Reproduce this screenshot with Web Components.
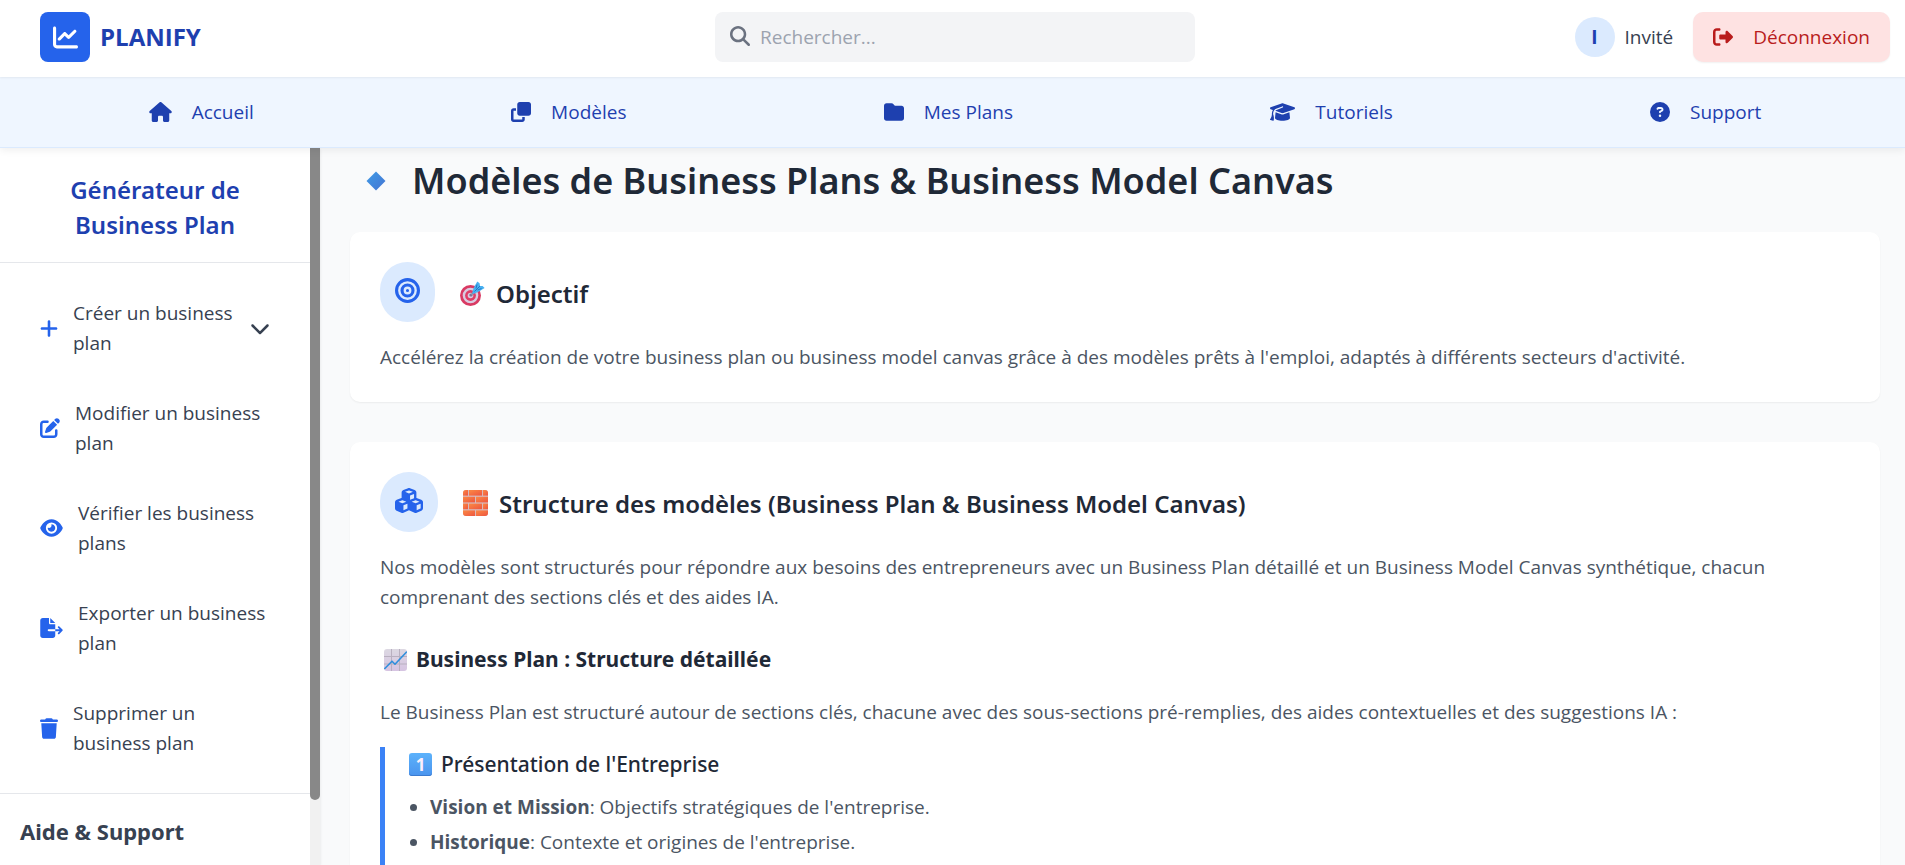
<!DOCTYPE html>
<html lang="fr">
<head>
<meta charset="utf-8">
<meta name="viewport" content="width=device-width, initial-scale=1">
<title>Planify – Modèles</title>
<style>
  :root {
    --blue-50: #eff6ff; --blue-100: #dbeafe; --blue-500: #3b82f6; --blue-600: #2563eb; --blue-800: #1e40af;
    --gray-50: #f9fafb; --gray-100: #f3f4f6; --gray-200: #e5e7eb; --gray-400: #9ca3af; --gray-500: #6b7280;
    --gray-600: #4b5563; --gray-700: #374151; --gray-800: #1f2937;
    --text: 19px; --heading: 24px; --subheading: 21px;
    --heading-font: "Noto Sans", "Open Sans", sans-serif;
  }
  body {
    margin: 0;
    font: 400 var(--text)/30px "Open Sans", "Noto Sans", sans-serif;
    color: var(--gray-700);
    background: var(--gray-50);
  }
</style>
</head>
<body>
<planify-app>
  <planify-header slot="header" user="Invité"></planify-header>
  <planify-nav slot="nav">
    <nav-link icon="home" size="23" href="#accueil">Accueil</nav-link>
    <nav-link icon="clone" size="20" href="#modeles">Modèles</nav-link>
    <nav-link icon="folder" size="20" href="#plans">Mes Plans</nav-link>
    <nav-link icon="graduation" size="25" href="#tutoriels">Tutoriels</nav-link>
    <nav-link icon="question" size="20" href="#support">Support</nav-link>
  </planify-nav>
  <planify-sidebar slot="sidebar" heading="Générateur de Business Plan">
    <side-item icon="plus" size="18" expandable>Créer un business plan</side-item>
    <side-item icon="edit" size="20">Modifier un business plan</side-item>
    <side-item icon="eye" size="23">Vérifier les business plans</side-item>
    <side-item icon="export" size="23">Exporter un business plan</side-item>
    <side-item icon="trash" size="18">Supprimer un business plan</side-item>
    <span slot="footer">Aide &amp; Support</span>
  </planify-sidebar>
  <page-title>Modèles de Business Plans &amp; Business Model Canvas</page-title>
  <doc-card icon="bullseye" size="25" emoji="target" heading="Objectif">
    <text-block>Accélérez la création de votre business plan ou business model canvas grâce à des modèles prêts à l'emploi, adaptés à différents secteurs d'activité.</text-block>
  </doc-card>
  <doc-card class="last" icon="cubes" size="28" emoji="bricks" heading="Structure des modèles (Business Plan &amp; Business Model Canvas)">
    <text-block>Nos modèles sont structurés pour répondre aux besoins des entrepreneurs avec un Business Plan détaillé et un Business Model Canvas synthétique, chacun comprenant des sections clés et des aides IA.</text-block>
    <sub-heading emoji="chart">Business Plan : Structure détaillée</sub-heading>
    <text-block>Le Business Plan est structuré autour de sections clés, chacune avec des sous-sections pré-remplies, des aides contextuelles et des suggestions IA :</text-block>
    <plan-section heading="Présentation de l'Entreprise">
      <plan-point term="Vision et Mission">Objectifs stratégiques de l'entreprise.</plan-point>
      <plan-point term="Historique">Contexte et origines de l'entreprise.</plan-point>
    </plan-section>
  </doc-card>
</planify-app>

<script>
const ICONS = {
  home: [576, 'M575.8 255.5c0 18-15 32.1-32 32.1h-32l.7 160.2c0 2.7-.2 5.4-.5 8.1V472c0 22.1-17.9 40-40 40H456c-1.1 0-2.2 0-3.3-.1c-1.4 .1-2.8 .1-4.2 .1H416 392c-22.1 0-40-17.9-40-40V448 384c0-17.7-14.3-32-32-32H256c-17.7 0-32 14.3-32 32v64 24c0 22.1-17.9 40-40 40H160 128.1c-1.5 0-3-.1-4.5-.2c-1.2 .1-2.4 .2-3.6 .2H104c-22.1 0-40-17.9-40-40V360c0-.9 0-1.9 .1-2.8V287.6H32c-18 0-32-14-32-32.1c0-9 3-17 10-24L266.4 8c7-7 15-8 22-8s15 2 21 7L564.8 231.5c8 7 12 15 11 24z'],
  line: [512, 'M64 64c0-17.7-14.3-32-32-32S0 46.3 0 64V400c0 44.2 35.8 80 80 80H480c17.7 0 32-14.3 32-32s-14.3-32-32-32H80c-8.8 0-16-7.2-16-16V64zm406.6 86.6c12.5-12.5 12.5-32.8 0-45.3s-32.8-12.5-45.3 0L320 210.7l-57.4-57.4c-12.5-12.5-32.8-12.5-45.3 0l-112 112c-12.5 12.5-12.5 32.8 0 45.3s32.8 12.5 45.3 0L240 221.3l57.4 57.4c12.5 12.5 32.8 12.5 45.3 0l128-128z'],
  clone: [512, 'M288 448H64V224h64V160H64c-35.3 0-64 28.7-64 64V448c0 35.3 28.7 64 64 64H288c35.3 0 64-28.7 64-64V384H288v64zm-64-96H448c35.3 0 64-28.7 64-64V64c0-35.3-28.7-64-64-64H224c-35.3 0-64 28.7-64 64V288c0 35.3 28.7 64 64 64z'],
  folder: [512, 'M64 480H448c35.3 0 64-28.7 64-64V160c0-35.3-28.7-64-64-64H288c-10.1 0-19.6-4.7-25.6-12.8L243.2 57.6C231.1 41.5 212.1 32 192 32H64C28.7 32 0 60.7 0 96V416c0 35.3 28.7 64 64 64z'],
  graduation: [640, 'M320 32c-8.1 0-16.1 1.4-23.7 4.1L15.8 137.4C6.3 140.9 0 149.9 0 160s6.3 19.1 15.8 22.6l57.9 20.9C57.3 229.3 48 259.8 48 291.9v28.1c0 28.4-10.8 57.7-22.3 80.8c-6.5 13-13.9 25.8-22.5 37.6C0 442.7-.9 448.3 .9 453.4s6 8.9 11.2 10.2l64 16c4.2 1.1 8.7 .3 12.4-2s6.3-6.1 7.1-10.4c8.6-42.8 4.3-81.2-2.1-108.7C90.3 344.3 86 329.8 80 316.5V291.9c0-30.2 10.2-58.7 27.9-81.5c12.9-15.5 29.6-28 49.2-35.7l157-61.7c8.2-3.2 17.5 .8 20.7 9s-.8 17.5-9 20.7l-157 61.7c-12.4 4.9-23.3 12.4-32.2 21.6l159.6 57.6c7.6 2.7 15.6 4.1 23.7 4.1s16.1-1.4 23.7-4.1L624.2 182.6c9.5-3.4 15.8-12.5 15.8-22.6s-6.3-19.1-15.8-22.6L343.7 36.1C336.1 33.4 328.1 32 320 32zM128 408c0 35.3 86 72 192 72s192-36.7 192-72L496.7 262.6 354.5 314c-11.1 4-22.8 6-34.5 6s-23.5-2-34.5-6L143.3 262.6 128 408z'],
  question: [512, 'M256 512A256 256 0 1 0 256 0a256 256 0 1 0 0 512zM169.8 165.3c7.9-22.3 29.1-37.3 52.8-37.3h58.3c34.9 0 63.1 28.3 63.1 63.1c0 22.6-12.1 43.5-31.7 54.8L280 264.4c-.2 13-10.9 23.6-24 23.6c-13.3 0-24-10.7-24-24V250.5c0-8.6 4.6-16.5 12.1-20.8l44.3-25.4c4.7-2.7 7.6-7.7 7.6-13.1c0-8.4-6.8-15.1-15.1-15.1H222.6c-3.4 0-6.4 2.1-7.5 5.3l-.4 1.2c-4.4 12.5-18.2 19-30.6 14.6s-19-18.2-14.6-30.6l.4-1.2zM224 352a32 32 0 1 1 64 0 32 32 0 1 1 -64 0z'],
  search: [512, 'M416 208c0 45.9-14.9 88.3-40 122.7L502.6 457.4c12.5 12.5 12.5 32.8 0 45.3s-32.8 12.5-45.3 0L330.7 376c-34.4 25.2-76.8 40-122.7 40C93.1 416 0 322.9 0 208S93.1 0 208 0S416 93.1 416 208zM208 352a144 144 0 1 0 0-288 144 144 0 1 0 0 288z'],
  logout: [512, 'M377.9 105.9L500.7 228.7c7.2 7.2 11.3 17.1 11.3 27.3s-4.1 20.1-11.3 27.3L377.9 406.1c-6.4 6.4-15 9.9-24 9.9c-18.7 0-33.9-15.2-33.9-33.9l0-62.1-128 0c-17.7 0-32-14.3-32-32l0-64c0-17.7 14.3-32 32-32l128 0 0-62.1c0-18.7 15.2-33.9 33.9-33.9c9 0 17.6 3.6 24 9.9zM160 96L96 96c-17.7 0-32 14.3-32 32l0 256c0 17.7 14.3 32 32 32l64 0c17.7 0 32 14.3 32 32s-14.3 32-32 32l-64 0c-53 0-96-43-96-96L0 128C0 75 43 32 96 32l64 0c17.7 0 32 14.3 32 32s-14.3 32-32 32z'],
  plus: [448, 'M256 80c0-17.7-14.3-32-32-32s-32 14.3-32 32V224H48c-17.7 0-32 14.3-32 32s14.3 32 32 32H192V432c0 17.7 14.3 32 32 32s32-14.3 32-32V288H400c17.7 0 32-14.3 32-32s-14.3-32-32-32H256V80z'],
  edit: [512, 'M471.6 21.7c-21.9-21.9-57.3-21.9-79.2 0L362.3 51.7l97.9 97.9 30.1-30.1c21.9-21.9 21.9-57.3 0-79.2L471.6 21.7zm-299.2 220c-6.1 6.1-10.8 13.6-13.5 21.9l-29.6 88.8c-2.9 8.6-.6 18.1 5.8 24.6s15.9 8.7 24.6 5.8l88.8-29.6c8.2-2.7 15.7-7.4 21.9-13.5L437.7 172.3 339.7 74.3 172.4 241.7zM96 64C43 64 0 107 0 160V416c0 53 43 96 96 96H352c53 0 96-43 96-96V320c0-17.7-14.3-32-32-32s-32 14.3-32 32v96c0 17.7-14.3 32-32 32H96c-17.7 0-32-14.3-32-32V160c0-17.7 14.3-32 32-32h96c17.7 0 32-14.3 32-32s-14.3-32-32-32H96z'],
  eye: [576, 'M288 32c-80.8 0-145.5 36.8-192.6 80.6C48.6 156 17.3 208 2.5 243.7c-3.3 7.9-3.3 16.7 0 24.6C17.3 304 48.6 356 95.4 399.4C142.5 443.2 207.2 480 288 480s145.5-36.8 192.6-80.6c46.8-43.5 78.1-95.4 93-131.1c3.3-7.9 3.3-16.7 0-24.6c-14.9-35.7-46.2-87.7-93-131.1C433.5 68.8 368.8 32 288 32zM144 256a144 144 0 1 1 288 0 144 144 0 1 1 -288 0zm144-64c0 35.3-28.7 64-64 64c-7.1 0-13.9-1.2-20.3-3.3c-5.5-1.8-11.9 1.6-11.7 7.4c.3 6.9 1.3 13.8 3.2 20.7c13.7 51.2 66.4 81.6 117.6 67.9s81.6-66.4 67.9-117.6c-11.1-41.5-47.8-69.4-88.6-71.1c-5.8-.2-9.2 6.1-7.4 11.7c2.1 6.4 3.3 13.2 3.3 20.3z'],
  export: [576, 'M0 64C0 28.7 28.7 0 64 0H224V128c0 17.7 14.3 32 32 32H384V288H216c-13.3 0-24 10.7-24 24s10.7 24 24 24H384V448c0 35.3-28.7 64-64 64H64c-35.3 0-64-28.7-64-64V64zM384 336V288H494.1l-39-39c-9.4-9.4-9.4-24.6 0-33.9s24.6-9.4 33.9 0l80 80c9.4 9.4 9.4 24.6 0 33.9l-80 80c-9.4 9.4-24.6 9.4-33.9 0s-9.4-24.6 0-33.9l39-39H384zm0-208H256V0L384 128z'],
  trash: [448, 'M135.2 17.7L128 32H32C14.3 32 0 46.3 0 64S14.3 96 32 96H416c17.7 0 32-14.3 32-32s-14.3-32-32-32H320l-7.2-14.3C307.4 6.8 296.3 0 284.2 0H163.8c-12.1 0-23.2 6.8-28.6 17.7zM416 128H32L53.2 467c1.6 25.3 22.6 45 47.9 45H346.9c25.3 0 46.3-19.7 47.9-45L416 128z'],
  chevron: [512, 'M233.4 406.6c12.5 12.5 32.8 12.5 45.3 0l192-192c12.5-12.5 12.5-32.8 0-45.3s-32.8-12.5-45.3 0L256 338.7 86.6 169.4c-12.5-12.5-32.8-12.5-45.3 0s-12.5 32.8 0 45.3l192 192z'],
  bullseye: [512, 'M448 256A192 192 0 1 0 64 256a192 192 0 1 0 384 0zM0 256a256 256 0 1 1 512 0A256 256 0 1 1 0 256zm256 80a80 80 0 1 0 0-160 80 80 0 1 0 0 160zm0-224a144 144 0 1 1 0 288 144 144 0 1 1 0-288zM224 256a32 32 0 1 1 64 0 32 32 0 1 1 -64 0z'],
  cubes: [576, 'M290.8 48.6l78.4 29.7L288 109.5 206.8 78.3l78.4-29.7c1.8-.7 3.8-.7 5.7 0zM136 92.5V204.7c-1.3 .4-2.6 .8-3.9 1.3l-96 36.4C14.4 250.6 0 271.5 0 294.7V413.9c0 22.2 13.1 42.3 33.5 51.3l96 42.2c14.4 6.3 30.7 6.3 45.1 0L288 457.5l113.5 49.9c14.4 6.3 30.7 6.3 45.1 0l96-42.2c20.3-8.9 33.5-29.1 33.5-51.3V294.7c0-23.3-14.4-44.1-36.1-52.4l-96-36.4c-1.3-.5-2.6-.9-3.9-1.3V92.5c0-23.3-14.4-44.1-36.1-52.4l-96-36.4c-12.8-4.8-26.9-4.8-39.7 0l-96 36.4C150.4 48.4 136 69.3 136 92.5zM392 210.6l-82.4 31.2V152.6L392 121v89.6zM154.8 250.9l78.4 29.7L152 311.7 70.8 280.6l78.4-29.7c1.8-.7 3.8-.7 5.7 0zm18.8 204.4V354.8L256 323.2v95.9l-82.4 36.2zM421.2 250.9c1.8-.7 3.8-.7 5.7 0l78.4 29.7L424 311.7l-81.2-31.1 78.4-29.7zM523.2 421.2l-77.6 34.1V354.8L528 323.2v90.7c0 3.2-1.9 6-4.8 7.3z'],
};

const EMOJI = {
  target: `<svg width="25" height="25" viewBox="0 0 25 25"><circle cx="10.5" cy="14.5" r="10.5" fill="#d93a63"/><circle cx="10.5" cy="14.5" r="7.8" fill="#d9cbe0"/><circle cx="10.5" cy="14.5" r="5.4" fill="#e03e66"/><circle cx="10.5" cy="14.5" r="2.8" fill="#d9cbe0"/><circle cx="11" cy="14" r="1.6" fill="#7d5d86"/><path d="M10.5 14.5 20 5" stroke="#7a8fa8" stroke-width="1.5"/><path d="M12.2 11.8 14 6.2 17.3 0.6 19.6 2.3 20 5 22.6 5 24.6 7 19 10.6 13.4 13z" fill="#48b1f1"/><path d="m14.5 10.5 5.5-5.5M17 3.5l-1 4M21.5 7.5l-4 1.5" stroke="#2777c4" stroke-width="1"/></svg>`,
  bricks: `<svg width="25" height="26" viewBox="0 0 25 26"><defs><linearGradient id="g" x1="0" x2="1" y1="0" y2="1"><stop offset="0" stop-color="#fb8a45"/><stop offset="1" stop-color="#ee5540"/></linearGradient><clipPath id="c"><rect width="25" height="26" rx="3"/></clipPath></defs><g clip-path="url(#c)"><rect width="25" height="26" fill="#d8b9bd"/><g fill="url(#g)"><rect width="5" height="5.6"/><rect x="6" width="13" height="5.6"/><rect x="20" width="5" height="5.6"/><rect y="6.8" width="12" height="5.6"/><rect x="13" y="6.8" width="12" height="5.6"/><rect y="13.6" width="5" height="5.6"/><rect x="6" y="13.6" width="13" height="5.6"/><rect x="20" y="13.6" width="5" height="5.6"/><rect y="20.4" width="12" height="5.6"/><rect x="13" y="20.4" width="12" height="5.6"/></g></g></svg>`,
  chart: `<svg width="23" height="22" viewBox="0 0 23 22"><defs><linearGradient id="g" x1="0" x2="0" y1="0" y2="1"><stop offset="0" stop-color="#dcd8e2"/><stop offset="1" stop-color="#d6c4e2"/></linearGradient></defs><rect width="23" height="22" rx="3" fill="url(#g)"/><path d="M7.5 0v22M15.5 0v22M0 7.5h23M0 15h23" stroke="#b9b0c0" stroke-width="1"/><path d="M.8 19.5 8 12.2l3 3L22.3 3.2" fill="none" stroke="#2f8fdc" stroke-width="1.6" stroke-linecap="round" stroke-linejoin="round"/></svg>`,
};

const svgIcon = (name, width) => {
  const [w, d] = ICONS[name];
  return `<svg class="icon" aria-hidden="true" width="${width}" height="${Math.round(width * 512 / w)}" viewBox="0 0 ${w} 512" fill="currentColor"><path d="${d}"/></svg>`;
};

class Base extends HTMLElement {
  connectedCallback() {
    if (this.shadowRoot) return;
    this.attachShadow({ mode: 'open' }).innerHTML =
      `<style>*{box-sizing:border-box}svg{display:block;flex:none}${this.css()}</style>${this.html()}`;
  }
  css() { return ''; }
  html() { return '<slot></slot>'; }
  attr(name) { return (this.getAttribute(name) || '').replace(/&/g, '&amp;'); }
}

customElements.define('planify-app', class extends Base {
  css() { return `
    :host{display:flex;flex-direction:column;height:100vh;overflow:hidden}
    .body{flex:1;min-height:0;display:flex}
    main{flex:1;min-width:0;overflow:hidden;display:flex;flex-direction:column;padding:8px 25px 0 30px}`; }
  html() { return `<slot name="header"></slot><slot name="nav"></slot>
    <div class="body"><slot name="sidebar"></slot><main><slot></slot></main></div>`; }
});

customElements.define('planify-header', class extends Base {
  css() { return `
    :host{display:block;position:relative;z-index:3;background:#fff;box-shadow:0 1px 2px rgba(0,0,0,.06)}
    header{display:grid;grid-template-columns:1fr 480px 1fr;align-items:center;padding:12px 15px 15px 20px}
    .brand{display:flex;align-items:center;gap:10px;margin-left:20px;color:var(--blue-800);font-size:var(--heading);font-weight:700;text-decoration:none}
    .logo{width:50px;height:50px;border-radius:8px;background:var(--blue-600);color:#fff;display:grid;place-items:center}
    label{position:relative;display:block}
    label .icon{position:absolute;left:15px;top:14px;color:var(--gray-500)}
    input{width:100%;height:50px;display:block;border:0;border-radius:8px;background:var(--gray-100);font:inherit;color:inherit;padding:0 15px 0 45px}
    input::placeholder{color:var(--gray-400);opacity:1}
    .user{display:flex;align-items:center;justify-content:flex-end}
    .avatar{width:40px;height:40px;border-radius:50%;background:var(--blue-100);color:var(--blue-800);font-weight:700;display:grid;place-items:center;margin-right:10px}
    button{display:flex;align-items:center;gap:20px;height:50px;margin-left:20px;padding:0 20px;border:0;border-radius:10px;background:#fee2e2;color:#b91c1c;font:inherit;box-shadow:0 1px 2px rgba(0,0,0,.06)}`; }
  html() { const user = this.attr('user'); return `<header>
    <a class="brand" href="#"><span class="logo">${svgIcon('line', 25)}</span>PLANIFY</a>
    <label>${svgIcon('search', 20)}<input type="search" aria-label="Rechercher" placeholder="Rechercher..."></label>
    <div class="user"><span class="avatar">${user[0]}</span><span>${user}</span>
      <button type="button">${svgIcon('logout', 20)}Déconnexion</button></div></header>`; }
});

customElements.define('planify-nav', class extends Base {
  css() { return `
    :host{display:block;position:relative;z-index:2;background:var(--blue-50);border-bottom:1px solid var(--blue-100);box-shadow:0 2px 8px rgba(0,0,0,.07)}
    nav{display:flex;justify-content:space-around;padding:0 15px 0 20px}`; }
  html() { return `<nav><slot></slot></nav>`; }
});

customElements.define('nav-link', class extends Base {
  css() { return `:host{display:block}
    a{display:flex;align-items:center;gap:20px;height:70px;color:var(--blue-800);text-decoration:none}`; }
  html() { return `<a href="${this.attr('href')}">${svgIcon(this.attr('icon'), +this.attr('size'))}<slot></slot></a>`; }
});

customElements.define('planify-sidebar', class extends Base {
  css() { return `
    :host{display:flex;flex:none;width:320px;position:relative;z-index:1;background:#fff;box-shadow:0 1px 3px rgba(0,0,0,.1)}
    aside{flex:1;min-width:0;overflow:hidden}
    h2{margin:0;padding:24px 40px 20px;border-bottom:1px solid var(--gray-200);color:var(--blue-800);font:600 var(--heading)/35px var(--heading-font);text-align:center}
    nav{display:flex;flex-direction:column;gap:10px;padding:20px}
    h3{margin:0;padding:20px;border-top:1px solid var(--gray-200);font:700 22px/35px var(--heading-font)}
    .track{flex:none;width:10px;background:#f1f1f1}
    .thumb{height:91%;background:#888;border-radius:0 0 5px 5px}`; }
  html() { return `<aside><h2>${this.attr('heading')}</h2><nav><slot></slot></nav><h3><slot name="footer"></slot></h3></aside>
    <div class="track" aria-hidden="true"><div class="thumb"></div></div>`; }
});

customElements.define('side-item', class extends Base {
  css() { return `:host{display:block}
    button{display:flex;align-items:center;gap:15px;width:100%;padding:15px 20px;border:0;background:none;font:inherit;color:inherit;text-align:left}
    .icon{color:var(--blue-600)} .label{flex:1}
    .label + .icon{color:var(--gray-700)}`; }
  html() { return `<button type="button">${svgIcon(this.attr('icon'), +this.attr('size'))}<span class="label"><slot></slot></span>${this.hasAttribute('expandable') ? svgIcon('chevron', 20) : ''}</button>`; }
});

customElements.define('page-title', class extends Base {
  css() { return `:host{display:block}
    h1{display:flex;align-items:center;gap:26px;margin:0 0 26px;padding:0 16px;color:var(--gray-800);font:600 36px/50px var(--heading-font)}`; }
  html() { return `<h1><svg width="20" height="20" viewBox="0 0 20 20" aria-hidden="true"><defs><linearGradient id="d" x1="0" x2="1" y1="0" y2="1"><stop offset="0" stop-color="#3f9be6"/><stop offset="1" stop-color="#4574d2"/></linearGradient></defs><path d="M10 .5 19.5 10 10 19.5.5 10z" fill="url(#d)"/></svg><span><slot></slot></span></h1>`; }
});

customElements.define('doc-card', class extends Base {
  css() { return `
    :host{display:flex;flex-direction:column;flex:none;margin-bottom:40px;padding:30px;border-radius:10px;background:#fff;box-shadow:0 1px 2px rgba(0,0,0,.06)}
    :host(.last){flex:1 0 auto;margin-bottom:0;padding-bottom:0;border-radius:10px 10px 0 0}
    .head{display:flex;align-items:center}
    .badge{height:60px;padding:16px 15px;border-radius:30px;background:var(--blue-100);color:var(--blue-600)}
    h2{display:flex;align-items:center;gap:11px;margin:2px 0 0 25px;color:var(--gray-800);font:600 var(--heading)/35px var(--heading-font)}`; }
  html() { return `<div class="head"><span class="badge">${svgIcon(this.attr('icon'), +this.attr('size'))}</span>
    <h2>${EMOJI[this.attr('emoji')]}<span>${this.attr('heading')}</span></h2></div><slot></slot>`; }
});

customElements.define('text-block', class extends Base {
  css() { return `:host{display:block} p{margin:20px 0 0;color:var(--gray-600)}`; }
  html() { return `<p><slot></slot></p>`; }
});

customElements.define('sub-heading', class extends Base {
  css() { return `:host{display:block}
    h3{display:flex;align-items:center;gap:9px;margin:30px 0 0;padding-left:4px;color:var(--gray-800);font:700 var(--subheading)/35px var(--heading-font)}`; }
  html() { return `<h3>${EMOJI[this.attr('emoji')]}<span><slot></slot></span></h3>`; }
});

customElements.define('plan-section', class extends Base {
  css() { return `
    :host{display:block;flex:1;margin-top:20px;padding-left:20px;border-left:5px solid var(--blue-500)}
    h4{display:flex;align-items:center;gap:9px;margin:0 0 10px;padding-left:4px;color:var(--gray-800);font:500 var(--subheading)/35px var(--heading-font)}
    .key{display:grid;place-items:center;width:23px;height:23px;border-radius:3px;background:linear-gradient(#5cb2fb,#4a94ee);box-shadow:inset 0 -1px 0 #3b7bd0;color:#fbeffb;font-size:17px;line-height:23px;font-weight:700}
    ul{display:flex;flex-direction:column;gap:5px;margin:0;padding:0;list-style:none}`; }
  html() { return `<h4><span class="key">1</span><span>${this.attr('heading')}</span></h4><ul role="list"><slot></slot></ul>`; }
});

customElements.define('plan-point', class extends Base {
  css() { return `:host{display:list-item;list-style:disc;margin-left:25px;color:var(--gray-600)} b{font-weight:700}`; }
  html() { return `<b>${this.attr('term')}</b>: <slot></slot>`; }
  connectedCallback() { this.setAttribute('role', 'listitem'); super.connectedCallback(); }
});
</script>
</body>
</html>
